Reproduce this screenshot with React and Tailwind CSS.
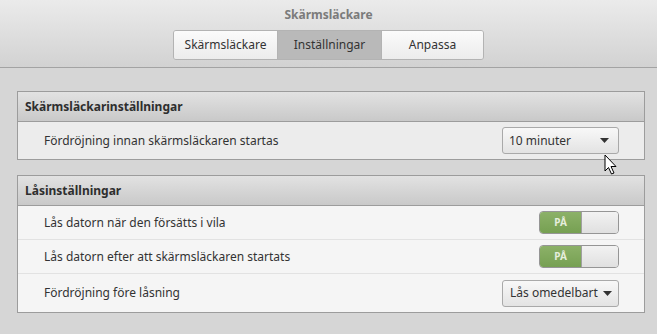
import { useState } from 'react';

const font = { fontFamily: '"Noto Sans", "Open Sans", sans-serif' };

function Dropdown({ label, wide }) {
  return (
    <div
      className={`flex items-center justify-between whitespace-nowrap h-[27px] w-[117px] rounded-[3px] border border-[#a9a9a9] bg-gradient-to-b from-[#f8f8f8] to-[#e3e3e3] text-[12px] text-[#333] ${
        wide ? 'pl-[7px] pr-[6px]' : 'pl-[6px] pr-[9px]'
      }`}
    >
      <span>{label}</span>
      <svg width="9" height="5" viewBox="0 0 9 5">
        <path d="M0 0 L9 0 L4.5 5 Z" fill="#333" />
      </svg>
    </div>
  );
}

function Switch() {
  return (
    <div className="flex h-[23px] w-[80px] rounded-[4px] border border-[#959595] overflow-hidden">
      <div className="w-[41px] flex items-center justify-center bg-gradient-to-b from-[#8cb168] to-[#76a052] text-[10px] font-bold text-[#e6eedd]">
        PÅ
      </div>
      <div className="flex-1 border-l border-[#a0a0a0] bg-gradient-to-b from-[#f2f2f2] to-[#e0e0e0]" />
    </div>
  );
}

function Section({ title, children }) {
  return (
    <section className="border border-[#9c9c9c]">
      <div className="h-[30px] flex items-center px-[7px] bg-gradient-to-b from-[#e2e2e2] to-[#c9c9c9] border-b border-[#9c9c9c] text-[12px] font-bold text-[#2e2e2e]">
        {title}
      </div>
      {children}
    </section>
  );
}

function Row({ label, children, h, bg, last }) {
  return (
    <div
      className={`flex items-center justify-between pl-[26px] pr-[25px] text-[12px] text-[#333] ${bg} ${
        last ? '' : 'border-b border-[#e2e2e2]'
      }`}
      style={{ height: h }}
    >
      <span>{label}</span>
      {children}
    </div>
  );
}

export default function App() {
  const [tab, setTab] = useState(1);
  const tabs = [
    ['Skärmsläckare', 'w-[103px]'],
    ['Inställningar', 'w-[104px]'],
    ['Anpassa', 'w-[102px]'],
  ];

  return (
    <div className="relative w-[657px] h-[334px] bg-[#d6d6d6] overflow-hidden" style={font}>
      <header className="h-[68px] bg-gradient-to-b from-[#ebebeb] to-[#d2d2d2] border-b border-[#a3a3a3] flex flex-col items-center">
        <h1 className="mt-[4px] h-[22px] flex items-center text-[12px] font-bold text-[#7b7b7b]">
          Skärmsläckare
        </h1>
        <div className="mt-[4px] flex h-[30px] rounded-[3px] border border-[#b3b3b3] overflow-hidden">
          {tabs.map(([name, w], i) => (
            <button
              key={name}
              onClick={() => setTab(i)}
              className={`${w} flex items-center justify-center text-[12px] text-[#333] ${
                i > 0 ? 'border-l border-[#b3b3b3]' : ''
              } ${
                tab === i
                  ? 'bg-[#b9b9b9]'
                  : 'bg-gradient-to-b from-[#fbfbfb] to-[#ececec]'
              }`}
            >
              {name}
            </button>
          ))}
        </div>
      </header>

      <main className="pl-[17px] pr-[12px] pt-[23px] flex flex-col gap-[15px]">
        <Section title="Skärmsläckarinställningar">
          <Row label="Fördröjning innan skärmsläckaren startas" h={37} bg="bg-[#ececec]" last>
            <Dropdown label="10 minuter" />
          </Row>
        </Section>

        <Section title="Låsinställningar">
          <Row label="Lås datorn när den försätts i vila" h={34} bg="bg-[#f5f5f5]">
            <Switch />
          </Row>
          <Row label="Lås datorn efter att skärmsläckaren startats" h={34} bg="bg-[#f5f5f5]">
            <Switch />
          </Row>
          <Row label="Fördröjning före låsning" h={38} bg="bg-[#f5f5f5]" last>
            <Dropdown label="Lås omedelbart" wide />
          </Row>
        </Section>
      </main>

      <svg
        className="absolute left-[604px] top-[154px]"
        width="14"
        height="22"
        viewBox="0 0 14 22"
      >
        <path
          d="M1 1 L1 17 L4.5 13.5 L7.5 20 L10 19 L7 12.5 L12 12.5 Z"
          fill="#fff"
          stroke="#000"
          strokeWidth="1"
          strokeLinejoin="round"
        />
      </svg>
    </div>
  );
}
